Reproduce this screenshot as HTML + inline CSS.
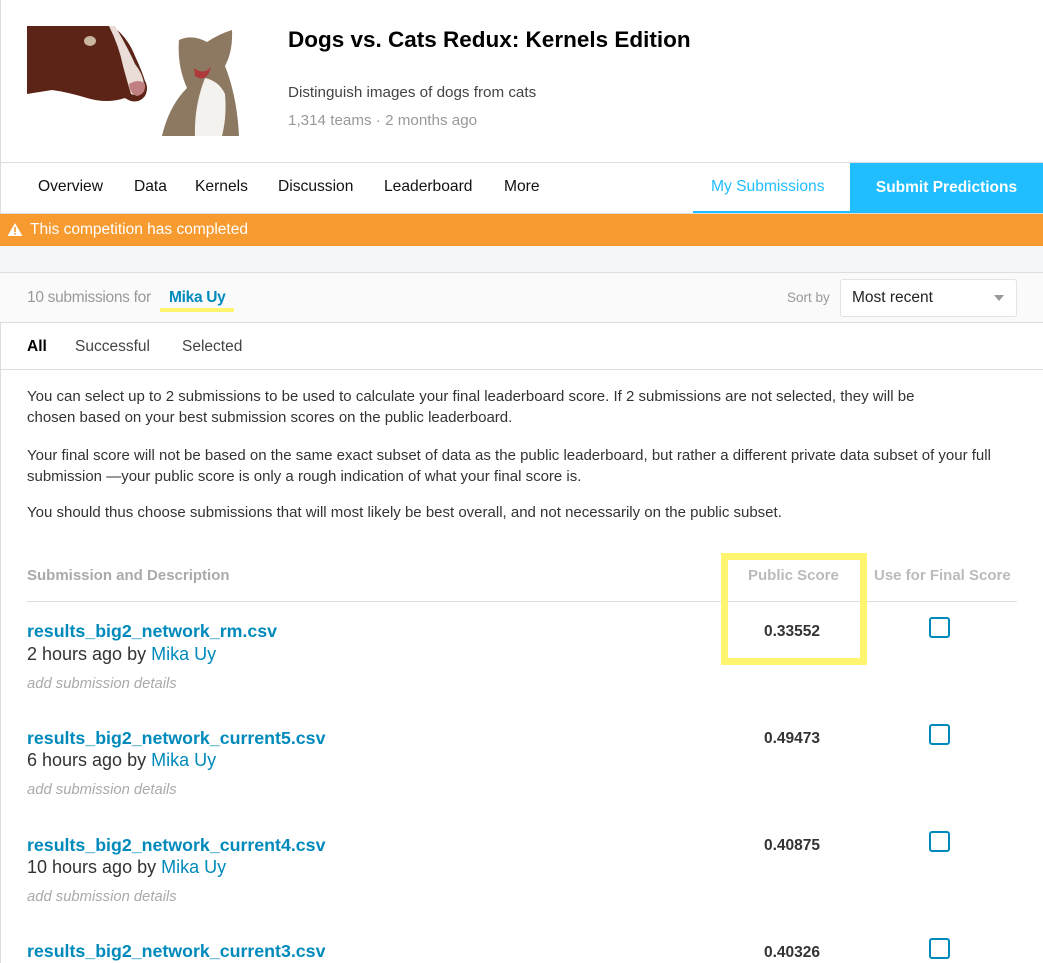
<!DOCTYPE html>
<html><head><meta charset="utf-8"><style>
*{margin:0;padding:0;box-sizing:border-box}
body{width:1043px;height:963px;overflow:hidden;background:#fff;font-family:"Liberation Sans",sans-serif;position:relative;color:#333}
.a{position:absolute;white-space:nowrap}
.blue{color:#008abc}
.nav{top:178px;font-size:15.6px;color:#111}
.fn{font-size:17.8px;font-weight:bold}
.by{font-size:18px;color:#333}
.ad{font-size:14.8px;font-style:italic;color:#aaa}
.sc{left:764px;font-size:15.5px;font-weight:bold;color:#333}
.cb{left:929px;width:21px;height:21px;border:2px solid #008abc;border-radius:3px}
</style></head><body>
<div class="a" style="left:0;top:0;width:1px;height:963px;background:#ddd"></div>
<svg class="a" style="left:27px;top:26px" width="235" height="112">
<path d="M0 0 L85 0 Q100 10 108 30 Q115 45 118 55 Q122 62 118 70 Q110 80 98 72 Q80 78 60 72 Q40 66 25 64 L0 68 Z" fill="#5b2417"/>
<path d="M88 0 Q100 20 108 38 Q116 48 117 58 Q113 72 104 68 Q100 55 96 40 Q92 20 82 0Z" fill="#eadcd6"/>
<path d="M102 58 Q112 52 118 58 Q119 68 110 70 Q103 68 102 58Z" fill="#c07f80"/>
<ellipse cx="63" cy="15" rx="6" ry="5" fill="#c9b6a0"/>
<path d="M152 14 Q165 8 180 16 Q192 8 205 4 Q206 25 198 40 Q210 70 212 110 L135 110 Q142 80 160 62 Q150 40 152 14Z" fill="#8d7862"/>
<path d="M178 52 Q192 55 198 68 Q200 90 195 110 L168 110 Q167 80 178 52Z" fill="#f4f2ef"/>
<path d="M167 42 Q178 50 184 40 Q180 58 168 50Z" fill="#b03a3a"/>
</svg>
<div class="a" style="left:288px;top:27px;font-size:22.5px;font-weight:bold;color:#000">Dogs vs. Cats Redux: Kernels Edition</div>
<div class="a" style="left:288px;top:84px;font-size:15.2px;color:#444">Distinguish images of dogs from cats</div>
<div class="a" style="left:288px;top:112px;font-size:15.2px;color:#999">1,314 teams · 2 months ago</div>
<div class="a" style="left:0;top:162px;width:1043px;height:1px;background:#ddd"></div>
<div class="a nav" style="left:38px">Overview</div>
<div class="a nav" style="left:134px">Data</div>
<div class="a nav" style="left:195px">Kernels</div>
<div class="a nav" style="left:278px">Discussion</div>
<div class="a nav" style="left:384px">Leaderboard</div>
<div class="a nav" style="left:504px">More</div>
<div class="a nav" style="left:711px;color:#20beff">My Submissions</div>
<div class="a" style="left:693px;top:211px;width:157px;height:2px;background:#20beff"></div>
<div class="a" style="left:850px;top:163px;width:193px;height:50px;background:#20beff;color:#fff;font-size:15.5px;font-weight:bold;text-align:center;line-height:50px">Submit Predictions</div>
<div class="a" style="left:0;top:213px;width:1043px;height:1px;background:#ddd"></div>
<div class="a" style="left:0;top:214px;width:1043px;height:32px;background:#f79a30"></div>
<svg class="a" style="left:7px;top:222px" width="16" height="15"><path d="M8 1 L15.5 14 L0.5 14 Z" fill="#fff"/><rect x="7.2" y="5" width="1.6" height="5" fill="#f79a30"/><rect x="7.2" y="11" width="1.6" height="1.6" fill="#f79a30"/></svg>
<div class="a" style="left:30px;top:221px;font-size:15.5px;color:#fff">This competition has completed</div>
<div class="a" style="left:0;top:246px;width:1043px;height:26px;background:#f4f6f7"></div>
<div class="a" style="left:0;top:272px;width:1043px;height:51px;background:#fafafa;border-top:1px solid #ddd;border-bottom:1px solid #ddd"></div>
<div class="a" style="left:27px;top:289px;font-size:15.5px;color:#999;letter-spacing:-0.3px">10 submissions for</div>
<div class="a" style="left:169px;top:289px;font-size:15.5px;font-weight:bold;letter-spacing:-0.3px"><span class="blue">Mika Uy</span></div>
<div class="a" style="left:160px;top:308px;width:74px;height:4px;background:#fff570"></div>
<div class="a" style="left:787px;top:290px;font-size:13.5px;color:#999">Sort by</div>
<div class="a" style="left:840px;top:279px;width:177px;height:38px;background:#fff;border:1px solid #e3e3e3;border-radius:3px"></div>
<div class="a" style="left:852px;top:289px;font-size:15.5px;color:#222">Most recent</div>
<svg class="a" style="left:994px;top:295px" width="10" height="6"><path d="M0 0 L10 0 L5 6Z" fill="#999"/></svg>
<div class="a" style="left:27px;top:338px;font-size:15.5px;font-weight:bold;color:#000">All</div>
<div class="a" style="left:75px;top:338px;font-size:15.5px;color:#444">Successful</div>
<div class="a" style="left:182px;top:338px;font-size:15.5px;color:#444">Selected</div>
<div class="a" style="left:0;top:369px;width:1043px;height:1px;background:#ddd"></div>
<div class="a" style="left:27px;top:386px;font-size:15px;line-height:21px;color:#333;white-space:normal;width:930px">You can select up to 2 submissions to be used to calculate your final leaderboard score. If 2 submissions are not selected, they will be chosen based on your best submission scores on the public leaderboard.</div>
<div class="a" style="left:27px;top:445px;font-size:15px;line-height:21px;color:#333;white-space:normal;width:990px">Your final score will not be based on the same exact subset of data as the public leaderboard, but rather a different private data subset of your full submission —your public score is only a rough indication of what your final score is.</div>
<div class="a" style="left:27px;top:504px;font-size:15px;color:#333">You should thus choose submissions that will most likely be best overall, and not necessarily on the public subset.</div>
<div class="a" style="left:27px;top:567px;font-size:15px;font-weight:bold;color:#aaa">Submission and Description</div>
<div class="a" style="left:748px;top:567px;font-size:15px;font-weight:bold;color:#bbb">Public Score</div>
<div class="a" style="left:874px;top:567px;font-size:15px;font-weight:bold;color:#bbb">Use for Final Score</div>
<div class="a" style="left:27px;top:601px;width:990px;height:1px;background:#ddd"></div>
<div class="a" style="left:721px;top:553px;width:146px;height:112px;border:7px solid #fff570"></div>

<div class="a fn" style="left:27px;top:621px"><span class="blue">results_big2_network_rm.csv</span></div>
<div class="a by" style="left:27px;top:644px">2 hours ago by <span class="blue">Mika Uy</span></div>
<div class="a ad" style="left:27px;top:676px">add submission details</div>
<div class="a sc" style="top:623px">0.33552</div>
<div class="a cb" style="top:617px"></div>

<div class="a fn" style="left:27px;top:728px"><span class="blue">results_big2_network_current5.csv</span></div>
<div class="a by" style="left:27px;top:750px">6 hours ago by <span class="blue">Mika Uy</span></div>
<div class="a ad" style="left:27px;top:782px">add submission details</div>
<div class="a sc" style="top:730px">0.49473</div>
<div class="a cb" style="top:724px"></div>

<div class="a fn" style="left:27px;top:835px"><span class="blue">results_big2_network_current4.csv</span></div>
<div class="a by" style="left:27px;top:857px">10 hours ago by <span class="blue">Mika Uy</span></div>
<div class="a ad" style="left:27px;top:889px">add submission details</div>
<div class="a sc" style="top:837px">0.40875</div>
<div class="a cb" style="top:831px"></div>

<div class="a fn" style="left:27px;top:941px"><span class="blue">results_big2_network_current3.csv</span></div>
<div class="a sc" style="top:944px">0.40326</div>
<div class="a cb" style="top:938px"></div>
</body></html>
